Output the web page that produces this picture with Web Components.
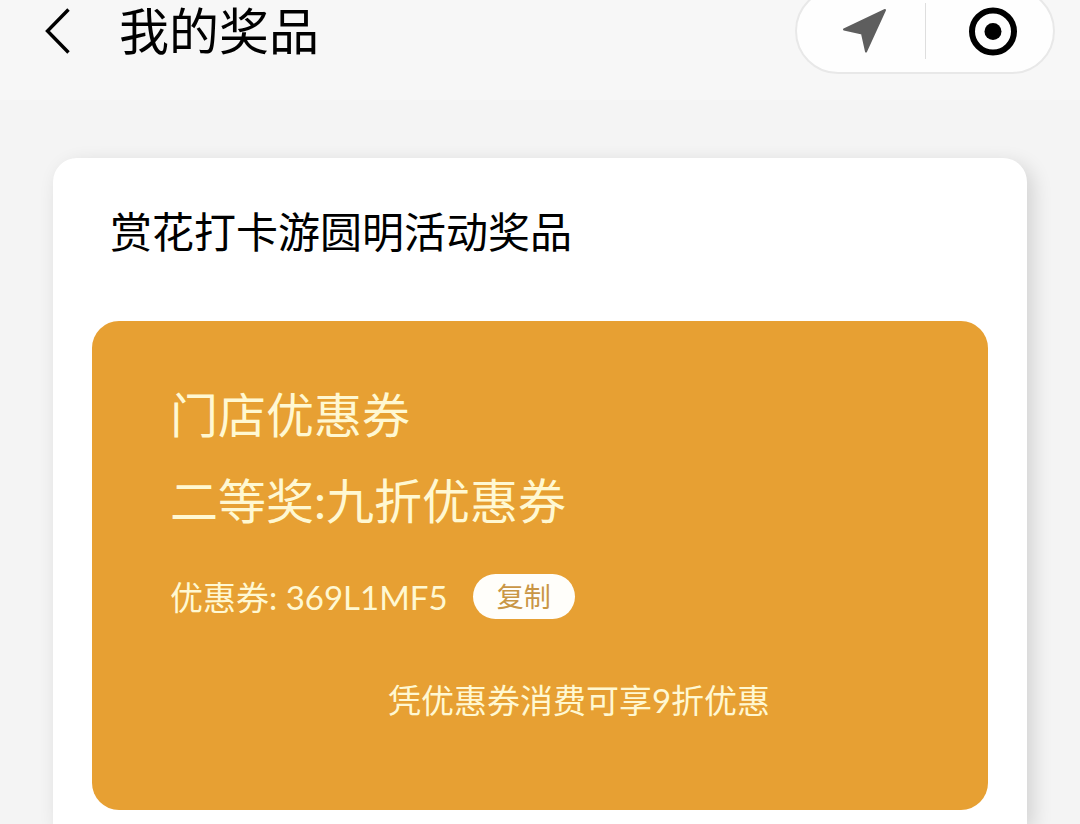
<!DOCTYPE html>
<html lang="zh-CN">
<head>
<meta charset="utf-8">
<meta name="viewport" content="width=device-width, initial-scale=1">
<title>我的奖品</title>
<style>
  body {
    margin: 0;
    background: #f4f4f4;
    color: #000;
    font-family: Lato, "Noto Sans CJK SC", sans-serif;
  }
</style>
</head>
<body>
<prize-page>
  <nav-header slot="header">我的奖品<capsule-menu slot="menu"></capsule-menu></nav-header>
  <prize-card>
    <span slot="title">赏花打卡游圆明活动奖品</span>
    <coupon-ticket code="369L1MF5">
      <span slot="kind">门店优惠券</span>
      <span slot="prize">二等奖:九折优惠券</span>
      <span slot="note">凭优惠券消费可享9折优惠</span>
    </coupon-ticket>
  </prize-card>
</prize-page>

<script>
  class BaseElement extends HTMLElement {
    constructor() {
      super();
      const template = document.createElement('template');
      template.innerHTML = this.constructor.markup;
      this.attachShadow({ mode: 'open' }).append(template.content.cloneNode(true));
    }
  }

  class PrizePage extends BaseElement {
    static markup = `
      <style>
        :host { display: flex; flex-direction: column; min-height: 100vh; }
        main { flex: 1; display: flex; flex-direction: column; padding: 58px 53px 0; }
      </style>
      <slot name="header"></slot>
      <main><slot></slot></main>`;
  }

  class NavHeader extends BaseElement {
    static markup = `
      <style>
        :host { display: block; background: #f7f7f7; padding-bottom: 38px; }
        header { display: flex; align-items: center; height: 62px; padding: 0 25px 0 40px; }
        button { display: flex; padding: 0; border: 0; background: none; color: inherit; cursor: pointer; }
        svg { display: block; }
        h1 { flex: 1; margin: 0 0 0 39px; font-size: 50px; line-height: 60px; font-weight: 400; white-space: nowrap; }
      </style>
      <header>
        <button type="button" aria-label="返回">
          <svg width="40" height="60" viewBox="0 0 40 60" fill="none" stroke="currentColor" stroke-width="3.4">
            <path d="M28.500 8.500 7.500 30 28.500 51.500"/>
          </svg>
        </button>
        <h1><slot></slot></h1>
        <slot name="menu"></slot>
      </header>`;
  }

  class CapsuleMenu extends BaseElement {
    static markup = `
      <style>
        :host {
          display: flex; align-items: center; flex: none; box-sizing: border-box;
          width: 260px; height: 86px; border: 2px solid #e8e8e8; border-radius: 43px; background: #fefefe;
        }
        button {
          flex: 1; display: flex; justify-content: center; padding: 0; border: 0;
          background: none; cursor: pointer;
        }
        button + button { border-left: 1px solid #dedede; }
        svg { display: block; }
      </style>
      <button type="button" aria-label="位置">
        <svg width="60" height="56" viewBox="0 0 60 56">
          <path d="M54 7 35 48.500 31 30.500 13 26.500Z" fill="#5e5e5e" stroke="#5e5e5e" stroke-width="2" stroke-linejoin="round"/>
        </svg>
      </button>
      <button type="button" aria-label="关闭">
        <svg width="64" height="56" viewBox="0 0 64 56">
          <circle cx="36" cy="28.500" r="21" fill="none" stroke="#000" stroke-width="6"/>
          <circle cx="36" cy="28.500" r="8.500" fill="#000"/>
        </svg>
      </button>`;
  }

  class PrizeCard extends BaseElement {
    static markup = `
      <style>
        :host {
          display: block; flex: 1; padding: 0 39px 14px; background: #fff;
          border-radius: 24px 24px 0 0; box-shadow: 6px 6px 20px rgba(0, 0, 0, .14);
        }
        h2 { margin: 0; padding: 44px 18px 59px; font-size: 42px; line-height: 60px; font-weight: 400; }
      </style>
      <h2><slot name="title"></slot></h2>
      <slot></slot>`;
  }

  class CouponTicket extends BaseElement {
    static markup = `
      <style>
        :host {
          display: block; padding: 51px 0 86px 78px; border-radius: 27px;
          background: #e7a033; color: #fff8d2; font-size: 33px; line-height: 48px;
        }
        p { margin: 0; }
        .headline { font-size: 48px; line-height: 86px; }
        .code { display: flex; align-items: center; gap: 25px; height: 45px; margin-top: 30px; }
        button {
          width: 102px; height: 45px; padding: 0; border: 0; border-radius: 23px;
          background: #fffefa; color: #c99645; font: inherit; font-size: 27px; line-height: 45px; cursor: pointer;
        }
        .note { margin-top: 57px; text-align: center; }
      </style>
      <p class="headline"><slot name="kind"></slot></p>
      <p class="headline"><slot name="prize"></slot></p>
      <div class="code"><span>优惠券: <span id="code"></span></span><button type="button">复制</button></div>
      <p class="note"><slot name="note"></slot></p>`;

    connectedCallback() {
      const code = this.getAttribute('code');
      this.shadowRoot.getElementById('code').textContent = code;
      this.shadowRoot.querySelector('button').onclick = () => navigator.clipboard?.writeText(code);
    }
  }

  customElements.define('prize-page', PrizePage);
  customElements.define('nav-header', NavHeader);
  customElements.define('capsule-menu', CapsuleMenu);
  customElements.define('prize-card', PrizeCard);
  customElements.define('coupon-ticket', CouponTicket);
</script>
</body>
</html>
